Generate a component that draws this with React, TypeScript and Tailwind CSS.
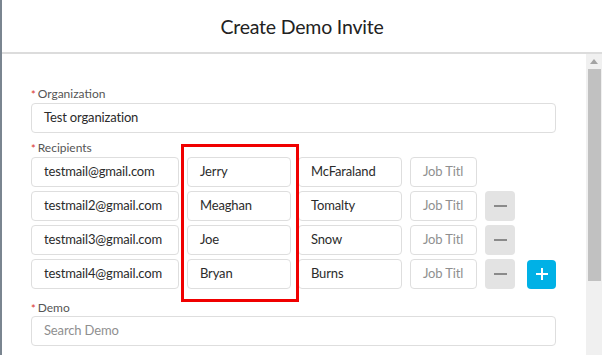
import React from "react";

const font = { fontFamily: "Lato, 'Open Sans', sans-serif" };

function Field({ value, placeholder, w }: { value?: string; placeholder?: string; w: string }) {
  return (
    <div
      className={`${w} h-[30px] shrink-0 flex items-center px-[12px] border border-[#dedede] rounded-[4px] bg-white text-[13px] tracking-[-0.15px] overflow-hidden whitespace-nowrap`}
    >
      {value ? (
        <span className="text-[#2b2b2b]">{value}</span>
      ) : (
        <span className="text-[#8f8f8f]">{placeholder}</span>
      )}
    </div>
  );
}

function Label({ text }: { text: string }) {
  return (
    <div className="h-[16px] flex items-center text-[12px] text-[#555] leading-none">
      <span className="text-[#d9312b] mr-[2px] text-[11px]">*</span>
      {text}
    </div>
  );
}

function MinusBtn() {
  return (
    <div className="w-[30px] h-[30px] shrink-0 rounded-[4px] bg-[#e3e3e3] flex items-center justify-center">
      <div className="w-[13px] h-[2px] bg-[#8a8a8a]" />
    </div>
  );
}

function PlusBtn() {
  return (
    <div className="w-[29px] h-[29px] shrink-0 rounded-[4px] bg-[#00b1e6] flex items-center justify-center relative">
      <div className="absolute w-[12px] h-[2px] bg-white" />
      <div className="absolute w-[2px] h-[12px] bg-white" />
    </div>
  );
}

const rows = [
  { email: "testmail@gmail.com", first: "Jerry", last: "McFaraland", minus: false, plus: false },
  { email: "testmail2@gmail.com", first: "Meaghan", last: "Tomalty", minus: true, plus: false },
  { email: "testmail3@gmail.com", first: "Joe", last: "Snow", minus: true, plus: false },
  { email: "testmail4@gmail.com", first: "Bryan", last: "Burns", minus: true, plus: true },
];

export default function App() {
  return (
    <div
      className="w-[602px] h-[355px] overflow-hidden bg-white relative border-l-[2px] border-[#7a8590] flex flex-col"
      style={font}
    >
      <div className="h-[54px] shrink-0 pt-[2px] flex items-center justify-center border-b-[2px] border-[#dcdcdc] text-[19.5px] tracking-[-0.2px] text-[#222]">
        Create Demo Invite
      </div>
      <div className="flex flex-1 min-h-0">
        <div className="flex-1 pl-[29px] pr-[30px] pt-[32px] flex flex-col">
          <Label text="Organization" />
          <div className="mt-[1px]">
            <Field value="Test organization" w="w-full" />
          </div>
          <div className="mt-[7px]">
            <Label text="Recipients" />
          </div>
          <div className="mt-[1px] flex flex-col gap-[4px]">
            {rows.map((r) => (
              <div key={r.email} className="flex items-center">
                <Field value={r.email} w="w-[148px]" />
                <div className="ml-[8px]">
                  <Field value={r.first} w="w-[104px]" />
                </div>
                <div className="ml-[7px]">
                  <Field value={r.last} w="w-[104px]" />
                </div>
                <div className="ml-[8px]">
                  <Field placeholder="Job Titl" w="w-[67px]" />
                </div>
                {r.minus && (
                  <div className="ml-[8px]">
                    <MinusBtn />
                  </div>
                )}
                {r.plus && (
                  <div className="ml-[12px]">
                    <PlusBtn />
                  </div>
                )}
              </div>
            ))}
          </div>
          <div className="mt-[11px]">
            <Label text="Demo" />
          </div>
          <div className="mt-[0px]">
            <Field placeholder="Search Demo" w="w-full" />
          </div>
        </div>
        <div className="w-[16px] shrink-0 bg-[#f0f0f0] flex flex-col items-center">
          <div className="h-[15px] flex items-center justify-center">
            <svg width="8" height="5" viewBox="0 0 8 5">
              <path d="M0 5 L4 0 L8 5 Z" fill="#a3a3a3" />
            </svg>
          </div>
          <div className="w-[13px] h-[212px] bg-[#c1c1c1]" />
        </div>
      </div>
      <div className="absolute left-[179px] top-[144px] w-[118px] h-[158px] border-[3px] border-[#f00000] pointer-events-none" />
    </div>
  );
}
